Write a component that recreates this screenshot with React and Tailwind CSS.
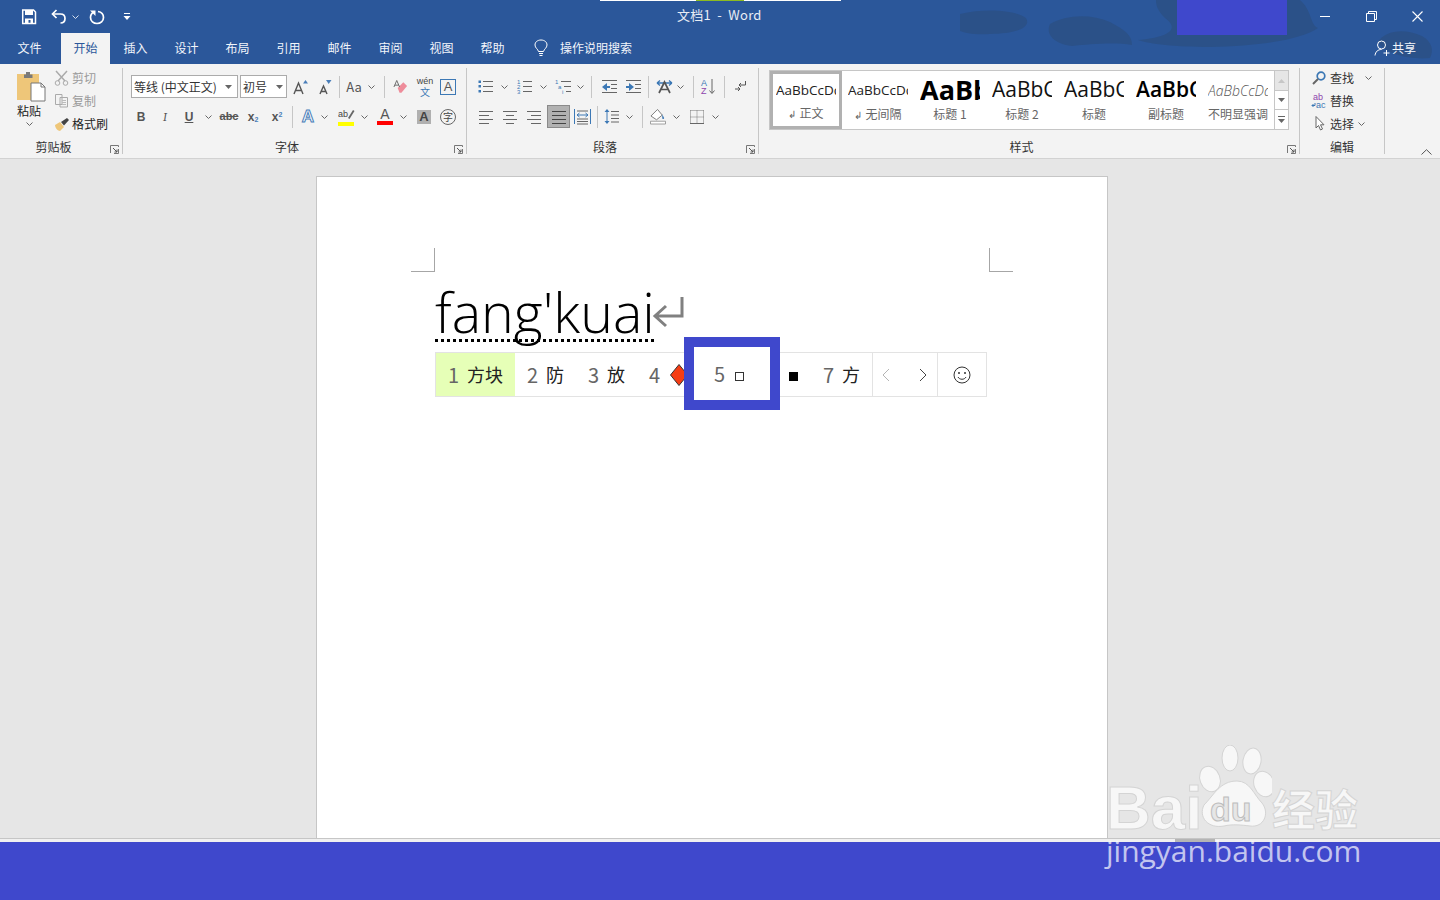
import React from 'react';

const Chev = ({ c = '#666' }) => (
  <svg width="7" height="4" viewBox="0 0 7 4" className="block">
    <path d="M.5.5 3.5 3.5 6.5.5" fill="none" stroke={c} strokeWidth="1" />
  </svg>
);

const Sep = ({ w = 'w-[6px]' }) => (
  <div className={`${w} h-[22px] flex justify-center shrink-0`}>
    <div className="w-px h-full bg-[#c6c6c6]" />
  </div>
);

const Cell = ({ w = 'w-[24px]', className = '', children }) => (
  <div className={`${w} h-[23px] flex items-center justify-center shrink-0 ${className}`}>{children}</div>
);

const Launcher = () => (
  <svg width="9" height="9" viewBox="0 0 9 9" className="block">
    <path d="M.5 8V.5H8.5V2M8.5 4V8.500H4" fill="none" stroke="#777" />
    <path d="M3 3 7 7M7 4.500V7H4.500" fill="none" stroke="#555" />
  </svg>
);

const Lines = ({ rows, stroke = '#666' }) => (
  <svg width="18" height="16" viewBox="0 0 18 16" className="block">
    {rows.map((r, i) => (
      <path key={i} d={`M${r[0]} ${r[2]}.500H${r[1]}`} stroke={stroke} />
    ))}
  </svg>
);

const Group = ({ w, label, launcher = true, className = '', children }) => (
  <div className={`${w} h-[86px] shrink-0 border-r border-[#c6c6c6] flex flex-col`}>
    <div className={`flex-1 min-h-0 ${className}`}>{children}</div>
    <div className={`relative h-[16px] text-center text-[12px] leading-[18px] text-[#333] ${launcher ? 'pr-[15px]' : ''}`}>
      {label}
      {launcher && (
        <div className="absolute right-[3px] top-[7px]">
          <Launcher />
        </div>
      )}
    </div>
  </div>
);

const SmallA = ({ up }) => (
  <svg width="16" height="16" viewBox="0 0 16 16" className="block">
    <path d={up ? 'M1 15 5.500 4 10 15M2.500 11.500H8.500' : 'M3 15 6.500 7 10 15M4 12.500H9'} fill="none" stroke="#555" strokeWidth="1.400" />
    <path d={up ? 'M10 4.500 12.500 1 15 4.500Z' : 'M9 1H14.500L11.700 5Z'} fill="#4a7eb9" />
  </svg>
);

const Tile = ({ label, sample, selected, mark }) => (
  <div
    className={`w-[72px] h-[58px] shrink-0 flex flex-col items-center overflow-hidden ${
      selected ? 'border-[3px] border-[#b1b1b1] bg-white' : ''
    }`}
  >
    <div className={`${selected ? 'h-[30px] mt-[1px]' : 'h-[32px] mt-[3px]'} w-[60px] overflow-hidden flex items-center whitespace-nowrap`}>
      {sample}
    </div>
    <div className="text-[12px] leading-[16px] text-[#666] whitespace-nowrap">
      {mark && <span className="text-[10px] mr-[3px]">↲</span>}
      {label}
    </div>
  </div>
);

const tabs = ['插入', '设计', '布局', '引用', '邮件', '审阅', '视图', '帮助'];

export default function App() {
  return (
    <div className="relative w-[1440px] h-[900px] overflow-hidden flex flex-col bg-[#e6e6e6] font-['Noto_Sans_CJK_SC',sans-serif]">
      {/* title bar and tabs */}
      <div className="relative h-[64px] shrink-0 bg-[#2b579a] text-white overflow-hidden">
        <svg width="480" height="64" viewBox="0 0 480 64" className="absolute right-0 top-0">
          <path d="M0 14C25 8 55 10 66 18 72 28 55 34 30 34 15 35 5 33 0 31Z" fill="#2b5188" />
          <path d="M90 24C105 15 130 13 150 22 165 30 172 35 172 45 155 42 130 44 112 46 95 44 85 35 90 24Z" fill="#2b5188" />
          <path d="M196 0H340C352 10 350 25 358 28 340 40 300 46 250 47 215 47 190 44 178 40 205 38 222 30 205 18 197 10 196 5 196 0Z" fill="#2b5188" />
          <path d="M418 42C425 30 445 28 462 36 472 42 474 50 470 58 450 60 425 54 418 42Z" fill="#2b5188" />
        </svg>
        <div className="absolute left-[1177px] top-0 w-[110px] h-[35px] bg-[#3f48cc]" />
        <div className="absolute left-[600px] top-0 w-[241px] h-px bg-white" />
        <div className="absolute left-[696px] top-0 w-[48px] h-px bg-[#8dbb20]" />

        <div className="relative h-[33px] flex items-center">
          <div className="ml-[21px] w-[16px] h-[16px]">
            <svg width="16" height="16" viewBox="0 0 16 16" className="block">
              <path d="M1.700 1H12.500L14.500 3V14.500H1.700Z" fill="none" stroke="#fff" strokeWidth="1.500" />
              <path d="M4 1H12V6H4Z" fill="#fff" />
              <path d="M4 9.500H12V14H9.500V11H7.500V14H4Z" fill="#fff" />
            </svg>
          </div>
          <div className="ml-[14px]">
            <svg width="16" height="15" viewBox="0 0 16 15" className="block">
              <path d="M5.500 1 1.500 5 5.500 9" fill="none" stroke="#fff" strokeWidth="1.700" />
              <path d="M2 5H9.500C12.500 5 14 7 14 9.500S12.500 14 9.500 14" fill="none" stroke="#fff" strokeWidth="1.700" />
            </svg>
          </div>
          <div className="ml-[5px]">
            <Chev c="#d5dfee" />
          </div>
          <div className="ml-[10px]">
            <svg width="16" height="16" viewBox="0 0 16 16" className="block">
              <path d="M5 3C2.500 4.200 1.500 6.300 1.500 8.500 1.500 12 4.500 14.500 8 14.500S14.500 12 14.500 8.500 12 3 9 2.500" fill="none" stroke="#fff" strokeWidth="1.700" />
              <path d="M1 1.500H6.500V7Z" fill="#fff" />
            </svg>
          </div>
          <div className="ml-[18px]">
            <svg width="8" height="8" viewBox="0 0 8 8" className="block">
              <path d="M1 .5H7" stroke="#fff" />
              <path d="M.5 3H7.500L4 7Z" fill="#fff" />
            </svg>
          </div>
          <div className="absolute left-[677px] top-[5px] text-[13px] leading-[20px] tracking-[0.25px] whitespace-pre text-[#e8edf5]">文档1  -  Word</div>
          <div className="ml-auto flex items-center">
            <div className="w-[46px] flex justify-center">
              <div className="w-[10px] h-px bg-white" />
            </div>
            <div className="w-[46px] flex justify-center">
              <svg width="11" height="11" viewBox="0 0 11 11" className="block">
                <path d="M.5 2.500H8.500V10.500H.5ZM2.500 2.500V.5H10.500V8.500H8.500" fill="none" stroke="#fff" />
              </svg>
            </div>
            <div className="w-[46px] flex justify-center">
              <svg width="11" height="11" viewBox="0 0 11 11" className="block">
                <path d="M.5.5 10.500 10.500M10.500.5.5 10.500" stroke="#fff" strokeWidth="1.100" />
              </svg>
            </div>
          </div>
        </div>

        <div className="relative h-[31px] pb-[2px] flex items-center text-[12px] text-[#f2f5fa]">
          <div className="w-[61px] pr-[2px] text-center">文件</div>
          <div className="w-[49px] h-[31px] pb-[2px] self-start bg-[#f3f3f3] text-[#2b579a] flex items-center justify-center">开始</div>
          <div className="flex">
            {tabs.map((t) => (
              <div key={t} className="w-[51px] text-center">{t}</div>
            ))}
          </div>
          <div className="ml-[16px] w-[16px]">
            <svg width="14" height="18" viewBox="0 0 14 18" className="block">
              <path d="M4.500 12.500C4 10 1 9 1 6 1 3 3.500 1 7 1S13 3 13 6C13 9 10 10 9.500 12.500Z" fill="none" stroke="#fff" />
              <path d="M5 14.500H9M5.500 16.500H8.500" stroke="#fff" />
            </svg>
          </div>
          <div className="ml-[10px]">操作说明搜索</div>
          <div className="ml-auto mr-[24px] flex items-center gap-[2px]">
            <svg width="16" height="16" viewBox="0 0 16 16" className="block">
              <circle cx="7.500" cy="5" r="4" fill="none" stroke="#fff" />
              <path d="M1 15.500C1.500 11.500 4 9.500 7.500 9.500M12.500 10V16M9.500 13H15.500" fill="none" stroke="#fff" />
            </svg>
            共享
          </div>
        </div>
      </div>

      {/* ribbon */}
      <div className="h-[95px] shrink-0 bg-[#f3f3f3] border-b border-[#d2d2d2] flex pt-[4px]">
        <Group w="w-[123px]" label="剪贴板" className="flex">
          <div className="w-[54px] pl-[4px] flex flex-col items-center text-[12px] text-[#222] leading-[14px]">
            <svg width="30" height="31" viewBox="0 0 30 31" className="block ml-[4px] mt-[3px]">
              <path d="M1 3H23V29H1Z" fill="#eec679" />
              <path d="M8 3.500H10V1H14V3.500H16.500V7H8Z" fill="#7a7a7a" />
              <path d="M15 12H25L29 16V30H15Z" fill="#fff" stroke="#777" />
              <path d="M25 12V16H29" fill="none" stroke="#777" />
            </svg>
            <div className="mt-[2px]">粘贴</div>
            <div className="mt-[4px]">
              <Chev />
            </div>
          </div>
          <div className="flex flex-col text-[12px] text-[#9a9a9a] leading-[23px] mt-[-1px]">
            <div className="flex items-center gap-[3px] h-[23px] mt-[-1px]">
              <svg width="15" height="16" viewBox="0 0 15 16" className="block">
                <path d="M2 1 11 11M13 1 4 11" stroke="#aaa" strokeWidth="1.500" />
                <circle cx="3.500" cy="13" r="2.300" fill="none" stroke="#aaa" />
                <circle cx="11.500" cy="13" r="2.300" fill="none" stroke="#aaa" />
              </svg>
              剪切
            </div>
            <div className="flex items-center gap-[3px] h-[23px]">
              <svg width="15" height="15" viewBox="0 0 15 15" className="block">
                <path d="M1.500 1.500H8V11.500H1.500ZM6 4.500H13.500V14H6Z" fill="#f3f3f3" stroke="#aaa" />
                <path d="M8 7.500H12M8 9.500H12M8 11.500H12" stroke="#bbb" />
              </svg>
              复制
            </div>
            <div className="flex items-center gap-[2px] h-[23px] text-[#222]">
              <svg width="16" height="14" viewBox="0 0 16 14" className="block">
                <path d="M1 8 6 5 10 10 6 14C4 14 1 11 1 8Z" fill="#eec679" />
                <path d="M7 5 13 1 15 3 10 8.500Z" fill="#444" />
              </svg>
              格式刷
            </div>
          </div>
        </Group>

        <Group w="w-[344px]" label="字体" className="pl-[8px] pt-[7px]">
          <div className="flex items-center h-[23px]">
            <div className="w-[107px] h-[23px] border border-[#ababab] bg-white flex items-center justify-between pl-[2px] pr-[5px] text-[12px] text-[#333] whitespace-nowrap">
              等线 (中文正文)
              <svg width="7" height="4" viewBox="0 0 7 4" className="block"><path d="M0 0H7L3.500 4Z" fill="#666" /></svg>
            </div>
            <div className="w-[47px] ml-[2px] h-[23px] border border-[#ababab] bg-white flex items-center justify-between pl-[2px] pr-[3px] text-[12px] text-[#333]">
              初号
              <svg width="7" height="4" viewBox="0 0 7 4" className="block"><path d="M0 0H7L3.500 4Z" fill="#666" /></svg>
            </div>
            <Cell className="ml-[2px]"><SmallA up /></Cell>
            <Cell><SmallA /></Cell>
            <Sep w="w-[4px]" />
            <Cell w="w-[26px]"><span className="text-[13px] text-[#555]">Aa</span></Cell>
            <Cell w="w-[8px]"><Chev /></Cell>
            <Sep w="w-[18px]" />
            <Cell w="w-[15px]">
              <svg width="16" height="16" viewBox="0 0 16 16" className="block">
                <path d="M5 9 11 3 15 7 9 14H7Z" fill="#ee8c9a" />
                <path d="M1 8 4 1 7 8M2 6H6" fill="none" stroke="#666" />
              </svg>
            </Cell>
            <Cell className="ml-[5px] flex-col">
              <span className="text-[9px] leading-[9px] text-[#444] font-['Liberation_Sans',sans-serif]">wén</span>
              <span className="text-[10px] leading-[11px] text-[#3c78b5]">文</span>
            </Cell>
            <Cell w="w-[22px]">
              <div className="w-[16px] h-[16px] border border-[#3c78b5] flex items-center justify-center text-[13px] leading-none text-[#555] font-['Liberation_Sans',sans-serif]">A</div>
            </Cell>
          </div>
          <div className="flex items-center h-[23px] mt-[7px] ml-[-2px] text-[#555] font-['Liberation_Sans',sans-serif]">
            <Cell><span className="text-[12px] font-bold">B</span></Cell>
            <Cell><span className="text-[12px] italic font-serif">I</span></Cell>
            <Cell><span className="text-[12px] font-bold underline">U</span></Cell>
            <Cell w="w-[14px]"><Chev /></Cell>
            <Cell className="ml-[2px]"><span className="text-[11px] line-through font-bold">abc</span></Cell>
            <Cell><span className="text-[12px] font-bold">x<sub className="text-[#4a7eb9] text-[7px]">2</sub></span></Cell>
            <Cell><span className="text-[12px] font-bold">x<sup className="text-[#4a7eb9] text-[7px]">2</sup></span></Cell>
            <Sep />
            <Cell className="ml-[1px]">
              <span className="text-[17px] font-bold text-white [-webkit-text-stroke:1px_#4a7eb9]">A</span>
            </Cell>
            <Cell w="w-[8px]"><Chev /></Cell>
            <Cell className="ml-[6px] flex-col">
              <svg width="17" height="18" viewBox="0 0 17 18" className="block">
                <path d="M10 10 15 2 16.500 3 11.500 11Z" fill="#666" />
                <text x="0" y="9" fontSize="9" fontFamily="Liberation Sans" fill="#444">ab</text>
                <path d="M0 14H16V18H0Z" fill="#ffff00" />
              </svg>
            </Cell>
            <Cell w="w-[12px]"><Chev /></Cell>
            <Cell className="ml-[3px] flex-col">
              <span className="text-[14px] leading-[13px] text-[#555]">A</span>
              <div className="w-[16px] h-[4px] bg-[#ff0000]" />
            </Cell>
            <Cell w="w-[12px]"><Chev /></Cell>
            <Cell className="ml-[3px]">
              <div className="w-[14px] h-[14px] bg-[#b0b0b0] flex items-center justify-center text-[13px] font-bold text-[#444]">A</div>
            </Cell>
            <Cell>
              <div className="w-[16px] h-[16px] rounded-full border border-[#666] flex items-center justify-center text-[10px] text-[#444] font-['Noto_Sans_CJK_SC',sans-serif]">字</div>
            </Cell>
          </div>
        </Group>

        <Group w="w-[292px]" label="段落" className="pl-[7px] pt-[7px]">
          <div className="flex items-center h-[23px]">
            <Cell>
              <svg width="16" height="15" viewBox="0 0 16 15" className="block">
                <path d="M.5 1.500H3V4H.5ZM.5 6H3V8.500H.5ZM.5 11H3V13.500H.5Z" fill="#3c78b5" />
                <path d="M5 2.500H15M5 7.500H15M5 12.500H15" stroke="#666" />
              </svg>
            </Cell>
            <Cell w="w-[12px]"><Chev /></Cell>
            <Cell className="ml-[3px]">
              <svg width="16" height="15" viewBox="0 0 16 15" className="block">
                <path d="M6 2.500H15M6 7.500H15M6 12.500H15" stroke="#666" />
                <text x="0" y="5" fontSize="6" fontFamily="Liberation Sans" fill="#3c78b5">1</text>
                <text x="0" y="10" fontSize="6" fontFamily="Liberation Sans" fill="#3c78b5">2</text>
                <text x="0" y="15" fontSize="6" fontFamily="Liberation Sans" fill="#3c78b5">3</text>
              </svg>
            </Cell>
            <Cell w="w-[12px]"><Chev /></Cell>
            <Cell className="ml-[2px]">
              <svg width="17" height="15" viewBox="0 0 17 15" className="block">
                <path d="M6 2.500H16M9 7.500H16M11 12.500H16" stroke="#666" />
                <text x="0" y="5" fontSize="6" fontFamily="Liberation Sans" fill="#3c78b5">1</text>
                <text x="3" y="10" fontSize="6" fontFamily="Liberation Sans" fill="#3c78b5">a</text>
                <text x="7" y="15" fontSize="6" fontFamily="Liberation Sans" fill="#3c78b5">i</text>
              </svg>
            </Cell>
            <Cell w="w-[10px]"><Chev /></Cell>
            <Sep w="w-[13px]" />
            <Cell w="w-[22px]">
              <svg width="17" height="14" viewBox="0 0 17 14" className="block">
                <path d="M1 7 6 3V11Z" fill="#3c78b5" />
                <path d="M5 7H9" stroke="#3c78b5" strokeWidth="2" />
                <path d="M1 .5H16M10 4.500H16M10 8.500H16M1 12.500H16" stroke="#666" />
              </svg>
            </Cell>
            <Cell w="w-[22px]" className="ml-[2px]">
              <svg width="17" height="14" viewBox="0 0 17 14" className="block">
                <path d="M9 7 4 3V11Z" fill="#3c78b5" />
                <path d="M1 7H5" stroke="#3c78b5" strokeWidth="2" />
                <path d="M1 .5H16M10 4.500H16M10 8.500H16M1 12.500H16" stroke="#666" />
              </svg>
            </Cell>
            <Sep w="w-[8px]" />
            <Cell>
              <svg width="17" height="15" viewBox="0 0 17 15" className="block">
                <path d="M1 4H16M1 4 4 1.500M1 4 4 6.500M16 4 13 1.500M16 4 13 6.500" fill="none" stroke="#3c78b5" strokeWidth="1.300" />
                <path d="M3 14 8.500 3 14 14M5 10.500H12" fill="none" stroke="#555" strokeWidth="1.700" />
              </svg>
            </Cell>
            <Cell w="w-[8px]"><Chev /></Cell>
            <Sep w="w-[18px]" />
            <Cell w="w-[14px]">
              <svg width="16" height="17" viewBox="0 0 16 17" className="block overflow-visible">
                <text x="0" y="8" fontSize="9" fontFamily="Liberation Sans" fill="#3c78b5">A</text>
                <text x="0" y="16" fontSize="9" fontFamily="Liberation Sans" fill="#8e44ad">Z</text>
                <path d="M11 1V15M8.500 12.500 11 15.500 13.500 12.500" fill="none" stroke="#666" />
              </svg>
            </Cell>
            <Sep w="w-[16px]" />
            <Cell w="w-[16px]">
              <svg width="12" height="13" viewBox="0 0 12 13" className="block">
                <path d="M11.500 1V5H5M7 3 5 5 7 7M1 9H6M4 7 6 9 4 11" fill="none" stroke="#555" />
              </svg>
            </Cell>
          </div>
          <div className="flex items-center h-[23px] mt-[7px]">
            <Cell><Lines rows={[[2, 16, 2], [2, 12, 6], [2, 16, 10], [2, 12, 14]]} /></Cell>
            <Cell><Lines rows={[[2, 16, 2], [5, 13, 6], [2, 16, 10], [5, 13, 14]]} /></Cell>
            <Cell><Lines rows={[[2, 16, 2], [6, 16, 6], [2, 16, 10], [6, 16, 14]]} /></Cell>
            <Cell w="w-[23px]" className="ml-[1px] bg-[#b1b1b1] border border-[#8a8a8a]">
              <Lines stroke="#444" rows={[[2, 16, 2], [2, 16, 6], [2, 16, 10], [2, 16, 14]]} />
            </Cell>
            <Cell>
              <svg width="17" height="17" viewBox="0 0 17 17" className="block">
                <path d="M.5 1V16M16.500 1V16" stroke="#3c78b5" />
                <path d="M3 3H14M3 11H14M3 13.500H14M3 16H14" stroke="#666" />
                <path d="M3 7H14M3 7 5.500 5M3 7 5.500 9M14 7 11.500 5M14 7 11.500 9" fill="none" stroke="#3c78b5" />
              </svg>
            </Cell>
            <Sep />
            <Cell>
              <svg width="16" height="17" viewBox="0 0 16 17" className="block">
                <path d="M3 1 .5 4H5.500ZM3 16 .5 13H5.500Z" fill="#3c78b5" />
                <path d="M3 3V14" stroke="#3c78b5" />
                <path d="M7 3.500H15M7 7H15M7 10.500H15M7 14H15" stroke="#666" />
              </svg>
            </Cell>
            <Cell w="w-[10px]"><Chev /></Cell>
            <Sep w="w-[16px]" />
            <Cell w="w-[16px]">
              <svg width="17" height="17" viewBox="0 0 17 17" className="block">
                <path d="M1 8 8 1 13 7 7 12Z" fill="#fff" stroke="#777" />
                <path d="M13 6 15 10C15 11.500 13 11.500 13 10Z" fill="#3c78b5" />
                <path d="M.5 13.500H16.500V16.500H.5Z" fill="#fff" stroke="#999" />
              </svg>
            </Cell>
            <Cell w="w-[20px]"><Chev /></Cell>
            <Cell w="w-[22px]">
              <svg width="14" height="14" viewBox="0 0 14 14" className="block">
                <path d="M.5.5H13.500M.5 7H13.500M.5.5V13.500M7 .5V13.500M13.500.5V13.500" stroke="#777" strokeDasharray="1 1" />
                <path d="M0 13.500H14" stroke="#666" />
              </svg>
            </Cell>
            <Cell w="w-[14px]"><Chev /></Cell>
          </div>
        </Group>

        <Group w="w-[541px]" label="样式" className="pl-[10px] pt-[2px]">
          <div className="flex w-[520px] h-[60px] border border-[#c6c6c6] bg-white">
            <Tile selected mark label="正文" sample={<span className="text-[13.5px] text-[#222] font-['Open_Sans',sans-serif]">AaBbCcDd</span>} />
            <Tile mark label="无间隔" sample={<span className="text-[13.5px] text-[#222] font-['Open_Sans',sans-serif]">AaBbCcDd</span>} />
            <Tile label="标题 1" sample={<span className="text-[27px] font-bold text-black font-['Open_Sans',sans-serif]">AaBbC</span>} />
            <Tile label="标题 2" sample={<span className="text-[21px] text-[#111] font-['Open_Sans',sans-serif]">AaBbC</span>} />
            <Tile label="标题" sample={<span className="text-[21px] text-[#111] font-['Open_Sans',sans-serif]">AaBbC</span>} />
            <Tile label="副标题" sample={<span className="text-[21px] font-semibold text-black font-['Open_Sans',sans-serif]">AaBbC</span>} />
            <Tile label="不明显强调" sample={<span className="text-[14px] italic font-light text-[#555] font-['Open_Sans',sans-serif]">AaBbCcDd</span>} />
            <div className="ml-auto w-[15px] border-l border-[#c6c6c6] flex flex-col">
              <div className="h-[20px] bg-[#e6e6e6] border-b border-[#c6c6c6] flex items-center justify-center">
                <svg width="7" height="4" viewBox="0 0 7 4" className="block"><path d="M0 4H7L3.500 0Z" fill="#c6c6c6" /></svg>
              </div>
              <div className="h-[19px] border-b border-[#c6c6c6] flex items-center justify-center">
                <svg width="7" height="4" viewBox="0 0 7 4" className="block"><path d="M0 0H7L3.500 4Z" fill="#666" /></svg>
              </div>
              <div className="flex-1 flex flex-col items-center justify-center gap-[2px]">
                <div className="w-[7px] h-px bg-[#666]" />
                <svg width="7" height="4" viewBox="0 0 7 4" className="block"><path d="M0 0H7L3.500 4Z" fill="#666" /></svg>
              </div>
            </div>
          </div>
        </Group>

        <Group w="w-[85px]" label="编辑" launcher={false} className="text-[12px] text-[#333]">
          <div className="flex items-center h-[23px] pl-[12px] mt-[-2px]">
            <svg width="14" height="14" viewBox="0 0 14 14" className="block">
              <circle cx="9" cy="5" r="3.800" fill="none" stroke="#3c78b5" strokeWidth="1.700" />
              <path d="M6 8 1 13" stroke="#666" strokeWidth="2" />
            </svg>
            <span className="ml-[4px]">查找</span>
            <span className="ml-[11px]"><Chev /></span>
          </div>
          <div className="flex items-center h-[23px] pl-[11px]">
            <svg width="16" height="16" viewBox="0 0 16 16" className="block overflow-visible">
              <text x="2" y="7" fontSize="9" fontFamily="Liberation Sans" fill="#8e44ad">ab</text>
              <text x="5" y="15" fontSize="9" fontFamily="Liberation Sans" fill="#3c78b5">ac</text>
              <path d="M4 10V12.500H1M2.500 11 1 12.500 2.500 14" fill="none" stroke="#3c78b5" />
            </svg>
            <span className="ml-[3px]">替换</span>
          </div>
          <div className="flex items-center h-[23px] pl-[15px]">
            <svg width="10" height="15" viewBox="0 0 10 15" className="block">
              <path d="M1 .5V12L3.500 9.500 5.500 14 7.500 13 5.500 8.800H9Z" fill="#fff" stroke="#666" />
            </svg>
            <span className="ml-[5px]">选择</span>
            <span className="ml-[4px]"><Chev /></span>
          </div>
        </Group>

        <div className="flex-1 flex items-end justify-end pr-[8px] pb-[3px]">
          <svg width="11" height="6" viewBox="0 0 11 6" className="block">
            <path d="M.5 5.500 5.500 .7 10.500 5.500" fill="none" stroke="#555" />
          </svg>
        </div>
      </div>

      {/* document canvas */}
      <div className="flex-1 min-h-0 pl-[316px] pt-[17px]">
        <div className="w-[792px] h-[662px] bg-white border border-b-0 border-[#c6c6c6] pl-[94px] pt-[71px]">
          <div className="flex justify-between w-[602px]">
            <div className="w-[24px] h-[24px] border-r border-b border-[#a6a6a6]" />
            <div className="w-[24px] h-[24px] border-l border-b border-[#a6a6a6]" />
          </div>
          <div className="ml-[24px] mt-[4px] h-[72px] flex items-center whitespace-nowrap">
            <span className="text-[55.5px] leading-[72px] font-light text-black font-['Open_Sans',sans-serif] underline decoration-dotted decoration-[3px] decoration-black underline-offset-[6px] [text-decoration-skip-ink:none]">fang'kuai</span>
            <svg width="32" height="34" viewBox="0 0 32 34" className="block ml-[-3px] mt-[-1px]">
              <path d="M30 2V21H4M14 11 3 21 14 31" fill="none" stroke="#808080" strokeWidth="3" />
            </svg>
          </div>
          <div className="ml-[24px] mt-[4px] w-[552px] h-[45px] border border-[#e3e3e3] flex items-center text-[18px] text-[#222] whitespace-nowrap">
            <div className="w-[79px] h-full bg-[#e6ffb7] pl-[12px] flex items-center">
              <span className="text-[#666] text-[20px] mr-[8px]">1</span>方块
            </div>
            <div className="w-[61px] pl-[12px] flex items-center"><span className="text-[#666] text-[20px] mr-[8px]">2</span>防</div>
            <div className="w-[61px] pl-[12px] flex items-center"><span className="text-[#666] text-[20px] mr-[8px]">3</span>放</div>
            <div className="w-[65px] pl-[12px] flex items-center">
              <span className="text-[#666] text-[20px] mr-[10px]">4</span>
              <svg width="18" height="22" viewBox="0 0 18 22" className="block shrink-0">
                <path d="M9 .5 17.500 11 9 21.500 .5 11Z" fill="#f53d14" stroke="#333" />
              </svg>
            </div>
            <div className="w-[49px]" />
            <div className="w-[60px] pl-[38px] flex items-center">
              <div className="w-[9px] h-[9px] bg-black mt-[3px]" />
            </div>
            <div className="w-[61px] pl-[12px] flex items-center"><span className="text-[#666] text-[20px] mr-[8px]">7</span>方</div>
            <div className="w-[65px] h-full border-l border-[#e3e3e3] flex items-center justify-between pl-[9px] pr-[10px]">
              <svg width="8" height="14" viewBox="0 0 8 14" className="block"><path d="M7 1 1 7 7 13" fill="none" stroke="#b5b5b5" /></svg>
              <svg width="8" height="14" viewBox="0 0 8 14" className="block"><path d="M1 1 7 7 1 13" fill="none" stroke="#444" /></svg>
            </div>
            <div className="flex-1 h-full border-l border-[#e3e3e3] flex items-center justify-center">
              <svg width="18" height="18" viewBox="0 0 18 18" className="block">
                <circle cx="9" cy="9" r="8" fill="none" stroke="#333" />
                <circle cx="6" cy="7" r="1" fill="#333" />
                <circle cx="12" cy="7" r="1" fill="#333" />
                <path d="M5 11C6.500 14 11.500 14 13 11" fill="none" stroke="#333" />
              </svg>
            </div>
          </div>
        </div>
      </div>

      {/* bottom strip */}
      <div className="relative h-[62px] shrink-0 border-t border-[#c6c6c6] bg-[#f0f0f0]">
        <div className="absolute left-[1175px] top-0 w-[40px] h-[3px] bg-[#b5b5b5]" />
        <div className="mt-[3px] h-[58px] bg-[#3f48cc]" />
      </div>

      {/* annotation box over the candidate bar */}
      <div className="absolute left-[684px] top-[337px] w-[96px] h-[73px] border-[10px] border-[#3f48cc] bg-white flex items-center pl-[20px] text-[20px] text-[#666]">
        5
        <div className="ml-[10px] mt-[5px] w-[9px] h-[9px] border border-[#333]" />
      </div>

      {/* watermark */}
      <div className="absolute left-[1106px] top-[745px] w-[260px] h-[125px] text-white pointer-events-none">
        <div className="absolute left-0 top-[38px] text-[62px] leading-[50px] font-bold text-[#f7f7f7] font-['Liberation_Sans',sans-serif] [-webkit-text-stroke:1px_#d4d4d4]">Bai</div>
        <svg width="80" height="85" viewBox="0 0 80 85" className="absolute left-[86px] top-0">
          <g fill="#f7f7f7" stroke="#d4d4d4">
            <ellipse cx="18" cy="34" rx="10" ry="13" transform="rotate(-20 18 34)" />
            <ellipse cx="38" cy="13" rx="8" ry="13" />
            <ellipse cx="60" cy="16" rx="9" ry="13" transform="rotate(10 60 16)" />
            <ellipse cx="72" cy="39" rx="10" ry="13" transform="rotate(-20 72 39)" />
            <path d="M45 36C58 36 62 50 70 58 78 68 72 83 58 81 50 80 40 79 32 81 16 84 6 72 12 60 22 50 28 36 45 36Z" />
          </g>
        </svg>
        <div className="absolute left-[104px] top-[47px] text-[34px] leading-[34px] font-bold text-[#e6e6e6] font-['Liberation_Sans',sans-serif] [-webkit-text-stroke:1px_#bdbdbd]">du</div>
        <div className="absolute left-[166px] top-[40px] text-[43px] leading-[44px] font-bold text-[#f7f7f7] [-webkit-text-stroke:1px_#d4d4d4] whitespace-nowrap">经验</div>
        <div className="absolute left-0 top-[88px] text-[30px] leading-[36px] text-white/70 whitespace-nowrap font-['Open_Sans',sans-serif]">jingyan.baidu.com</div>
      </div>
    </div>
  );
}
